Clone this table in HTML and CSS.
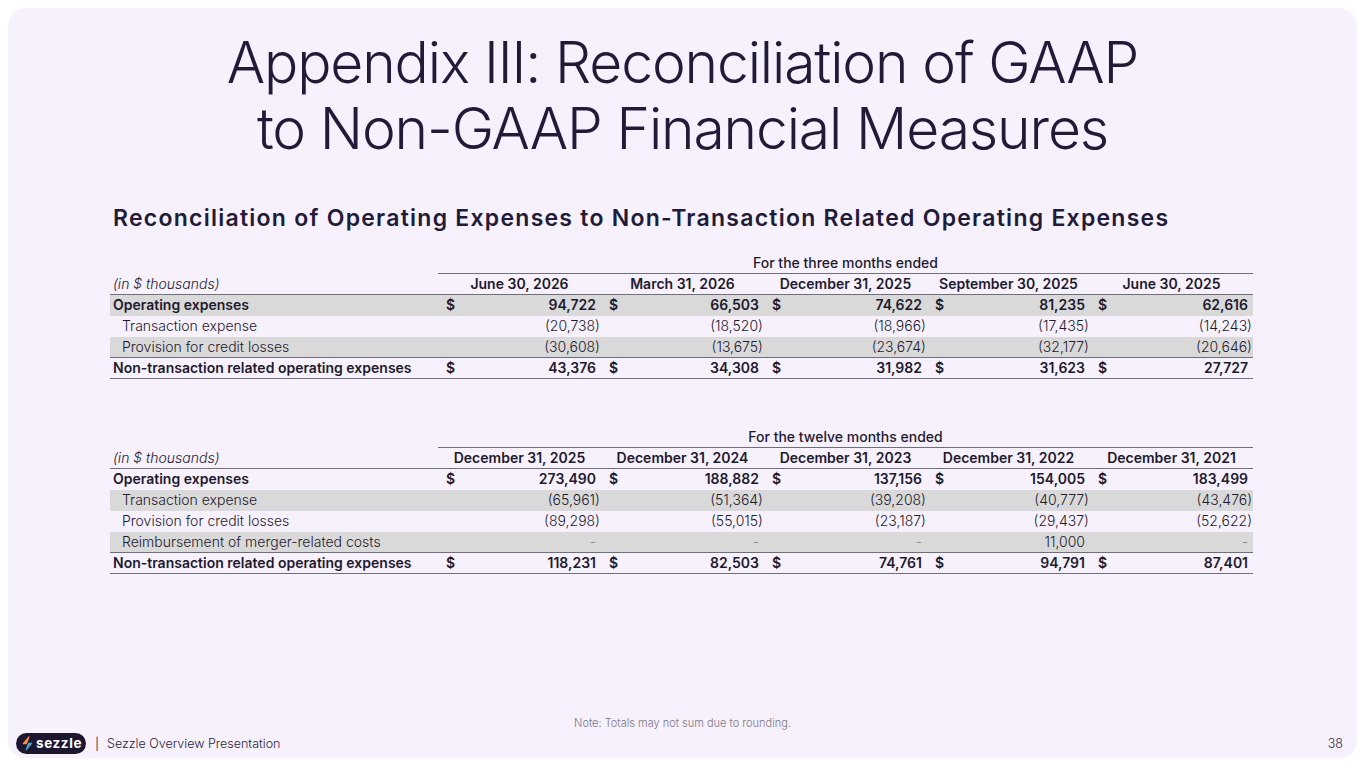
FILE: index.html
```html
<!DOCTYPE html>
<html lang="en">
<head>
<meta charset="utf-8">
<title>Appendix III</title>
<link rel="stylesheet" href="styles.css">
</head>
<body>
<div class="slide">
  <h1 class="title">Appendix III: Reconciliation of GAAP<br>to Non-GAAP Financial Measures</h1>
  <h2 class="subtitle">Reconciliation of Operating Expenses to Non-Transaction Related Operating Expenses</h2>

  <table class="fin">
    <colgroup><col class="c-label"><col class="c-val"><col class="c-val"><col class="c-val"><col class="c-val"><col class="c-val"></colgroup>
    <thead>
      <tr class="period"><th></th><th colspan="5" class="ptitle">For the three months ended</th></tr>
      <tr class="dates"><th class="unit">(in $ thousands)</th><th>June 30, 2026</th><th>March 31, 2026</th><th>December 31, 2025</th><th>September 30, 2025</th><th>June 30, 2025</th></tr>
    </thead>
    <tbody>
      <tr class="bold shade"><td class="lbl">Operating expenses</td><td class="v"><span class="cur">$</span><span class="pos">94,722</span></td><td class="v"><span class="cur">$</span><span class="pos">66,503</span></td><td class="v"><span class="cur">$</span><span class="pos">74,622</span></td><td class="v"><span class="cur">$</span><span class="pos">81,235</span></td><td class="v"><span class="cur">$</span><span class="pos">62,616</span></td></tr>
      <tr><td class="lbl sub">Transaction expense</td><td class="v">(20,738)</td><td class="v">(18,520)</td><td class="v">(18,966)</td><td class="v">(17,435)</td><td class="v">(14,243)</td></tr>
      <tr class="shade"><td class="lbl sub">Provision for credit losses</td><td class="v">(30,608)</td><td class="v">(13,675)</td><td class="v">(23,674)</td><td class="v">(32,177)</td><td class="v">(20,646)</td></tr>
      <tr class="bold total"><td class="lbl">Non-transaction related operating expenses</td><td class="v"><span class="cur">$</span><span class="pos">43,376</span></td><td class="v"><span class="cur">$</span><span class="pos">34,308</span></td><td class="v"><span class="cur">$</span><span class="pos">31,982</span></td><td class="v"><span class="cur">$</span><span class="pos">31,623</span></td><td class="v"><span class="cur">$</span><span class="pos">27,727</span></td></tr>
    </tbody>
  </table>

  <table class="fin second">
    <colgroup><col class="c-label"><col class="c-val"><col class="c-val"><col class="c-val"><col class="c-val"><col class="c-val"></colgroup>
    <thead>
      <tr class="period"><th></th><th colspan="5" class="ptitle">For the twelve months ended</th></tr>
      <tr class="dates"><th class="unit">(in $ thousands)</th><th>December 31, 2025</th><th>December 31, 2024</th><th>December 31, 2023</th><th>December 31, 2022</th><th>December 31, 2021</th></tr>
    </thead>
    <tbody>
      <tr class="bold"><td class="lbl">Operating expenses</td><td class="v"><span class="cur">$</span><span class="pos">273,490</span></td><td class="v"><span class="cur">$</span><span class="pos">188,882</span></td><td class="v"><span class="cur">$</span><span class="pos">137,156</span></td><td class="v"><span class="cur">$</span><span class="pos">154,005</span></td><td class="v"><span class="cur">$</span><span class="pos">183,499</span></td></tr>
      <tr class="shade"><td class="lbl sub">Transaction expense</td><td class="v">(65,961)</td><td class="v">(51,364)</td><td class="v">(39,208)</td><td class="v">(40,777)</td><td class="v">(43,476)</td></tr>
      <tr><td class="lbl sub">Provision for credit losses</td><td class="v">(89,298)</td><td class="v">(55,015)</td><td class="v">(23,187)</td><td class="v">(29,437)</td><td class="v">(52,622)</td></tr>
      <tr class="shade"><td class="lbl sub">Reimbursement of merger-related costs</td><td class="v"><span class="pos dash">-</span></td><td class="v"><span class="pos dash">-</span></td><td class="v"><span class="pos dash">-</span></td><td class="v"><span class="pos">11,000</span></td><td class="v"><span class="pos dash">-</span></td></tr>
      <tr class="bold total"><td class="lbl">Non-transaction related operating expenses</td><td class="v"><span class="cur">$</span><span class="pos">118,231</span></td><td class="v"><span class="cur">$</span><span class="pos">82,503</span></td><td class="v"><span class="cur">$</span><span class="pos">74,761</span></td><td class="v"><span class="cur">$</span><span class="pos">94,791</span></td><td class="v"><span class="cur">$</span><span class="pos">87,401</span></td></tr>
    </tbody>
  </table>

  <div class="spacer"></div>
  <p class="note">Note: Totals may not sum due to rounding.</p>
  <footer class="footer">
    <div class="brand">
      <span class="logo">
        <svg class="bolt" width="11" height="15" viewBox="0 0 11 15" aria-hidden="true">
          <defs>
            <linearGradient id="bgTop" x1="0" y1="0" x2="1" y2="1">
              <stop offset="0" stop-color="#ffc247"/>
              <stop offset="1" stop-color="#ff6b3d"/>
            </linearGradient>
            <linearGradient id="bgBot" x1="0" y1="0" x2="1" y2="1">
              <stop offset="0" stop-color="#2fd69e"/>
              <stop offset="1" stop-color="#7c5cf6"/>
            </linearGradient>
          </defs>
          <path d="M6.6 0.5 C7 0.1 7.6 0.4 7.4 0.9 L5.9 5.6 L4.6 8.3 H1.4 C0.8 8.3 0.5 7.7 0.9 7.2 Z" fill="url(#bgTop)"/>
          <path d="M4.4 14.5 C4 14.9 3.4 14.6 3.6 14.1 L5.1 9.4 L6.4 6.7 H9.6 C10.2 6.7 10.5 7.3 10.1 7.8 Z" fill="url(#bgBot)"/>
        </svg>
        <span class="word">sezzle</span>
      </span>
      <span class="sep">|</span>
      <span class="deck">Sezzle Overview Presentation</span>
    </div>
    <span class="pagenum">38</span>
  </footer>
</div>
</body>
</html>
```

FILE: styles.css
```css
* { box-sizing: border-box; }

html, body {
  margin: 0;
  padding: 0;
  background: #ffffff;
}

body {
  font-family: "Inter", "Noto Sans", sans-serif;
  color: #1e1a2e;
}

.slide {
  margin: 8px;
  width: 1349px;
  height: 750px;
  background: #f6f1fd;
  border-radius: 18px;
  display: flex;
  flex-direction: column;
  padding: 22px 0 4px;
}

.title {
  margin: 0;
  text-align: center;
  font-weight: 300;
  font-size: 57px;
  line-height: 66px;
  color: #221b38;
  letter-spacing: -1.15px;
}

.subtitle {
  margin: 41px 0 0 105px;
  font-size: 23px;
  line-height: 30px;
  font-weight: 600;
  color: #221b38;
  letter-spacing: 1.25px;
}

.fin {
  width: 1143px;
  margin: 20px 0 0 102px;
  border-collapse: collapse;
  table-layout: fixed;
  font-size: 14px;
  color: #1e1a2e;
}

.fin.second {
  margin-top: 48px;
}

.fin col.c-label { width: 328px; }
.fin col.c-val { width: 163px; }

.fin th,
.fin td {
  padding: 0;
  height: 21px;
  line-height: 20px;
  white-space: nowrap;
}

.period th {
  height: 20px;
  font-weight: 500;
  text-align: center;
}

.period .ptitle {
  border-bottom: 1px solid #6f6f7a;
}

.dates th {
  font-weight: 600;
  text-align: center;
  border-bottom: 1px solid #6f6f7a;
}

.dates .unit {
  text-align: left;
  font-style: italic;
  font-weight: 300;
  padding-left: 3px;
}

.fin td.lbl {
  padding-left: 3px;
  font-weight: 300;
}

.fin td.lbl.sub {
  padding-left: 12px;
}

.fin tr.bold td,
.fin tr.bold td.lbl {
  font-weight: 600;
}

.fin td.v {
  text-align: right;
  padding: 0 1px 0 8px;
  font-weight: 300;
}

.cur { float: left; }
.pos { padding-right: 4px; }
.dash { color: #8a8a8a; }

.fin tr.shade td {
  background: #d9d9d9;
}

.fin tr.total td {
  border-top: 1px solid #6f6f7a;
  border-bottom: 1px solid #6f6f7a;
}

.spacer { flex: 1; }

.note {
  margin: 0 0 3px;
  text-align: center;
  font-size: 11px;
  line-height: 14px;
  font-weight: 300;
  color: #7b7785;
}

.footer {
  display: flex;
  align-items: center;
  justify-content: space-between;
  padding: 0 14px 0 8px;
  height: 21px;
}

.brand {
  display: flex;
  align-items: center;
}

.logo {
  display: inline-flex;
  align-items: center;
  gap: 3px;
  height: 21px;
  width: 70px;
  padding: 0 0 0 6px;
  background: #1d1630;
  border-radius: 11px;
}

.bolt { display: block; }

.word {
  color: #ffffff;
  font-weight: 700;
  font-size: 13.5px;
  line-height: 21px;
  letter-spacing: 0.6px;
}

.sep {
  margin: 0 8px 0 9px;
  font-size: 12px;
  color: #3a3548;
}

.deck,
.pagenum {
  font-size: 12.5px;
  font-weight: 300;
  color: #2a2538;
}
```
